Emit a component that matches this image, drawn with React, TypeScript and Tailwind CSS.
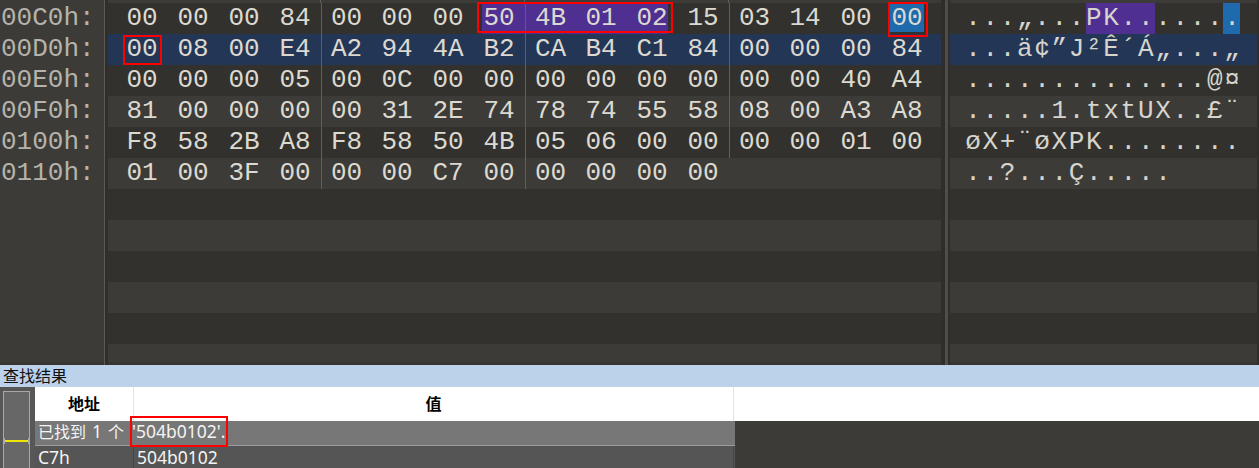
const hexRows: { addr: string; bytes: string[]; text: string }[] = [
  {
    addr: "00C0h:",
    bytes: "00 00 00 84 00 00 00 50 4B 01 02 15 03 14 00 00".split(" "),
    text: "...„...PK.......",
  },
  {
    addr: "00D0h:",
    bytes: "00 08 00 E4 A2 94 4A B2 CA B4 C1 84 00 00 00 84".split(" "),
    text: "...ä¢”J²Ê´Á„...„",
  },
  {
    addr: "00E0h:",
    bytes: "00 00 00 05 00 0C 00 00 00 00 00 00 00 00 40 A4".split(" "),
    text: "..............@¤",
  },
  {
    addr: "00F0h:",
    bytes: "81 00 00 00 00 31 2E 74 78 74 55 58 08 00 A3 A8".split(" "),
    text: ".....1.txtUX..£¨",
  },
  {
    addr: "0100h:",
    bytes: "F8 58 2B A8 F8 58 50 4B 05 06 00 00 00 00 01 00".split(" "),
    text: "øX+¨øXPK........",
  },
  {
    addr: "0110h:",
    bytes: "01 00 3F 00 00 00 C7 00 00 00 00 00".split(" "),
    text: "..?...Ç.....",
  },
];

const EMPTY_ROWS = 6;
const mono = "font-['Liberation_Mono','Courier_New',monospace]";

function rowBg(i: number) {
  if (i === 1) return "bg-[#243656]";
  return i % 2 === 0 ? "bg-[#32312d]" : "bg-[#3c3b37]";
}

function HexRow({ bytes, index }: { bytes: string[]; index: number }) {
  return (
    <div className={`relative flex h-[31px] shrink-0 pl-[8.5px] ${rowBg(index)}`}>
      {/* selection: 50 4B 01 02 and the single 00 */}
      {index === 0 && (
        <>
          <div className="absolute top-0 bottom-0 left-[374px] w-[186px] bg-[#4f2f92]" />
          <div className="absolute top-0 bottom-[2px] left-[782px] w-[34px] bg-[#1f69ad]" />
        </>
      )}
      {bytes.map((b, i) => (
        <div
          key={i}
          className={`relative w-[51px] text-center leading-[31px] ${
            i > 0 && i % 4 === 0 ? "border-l border-[#605f5a]" : ""
          }`}
        >
          {b}
        </div>
      ))}
    </div>
  );
}

function TextRow({ text, index }: { text: string; index: number }) {
  return (
    <div className={`relative flex h-[31px] shrink-0 pl-[14.4px] ${rowBg(index)}`}>
      {index === 0 && (
        <>
          <div className="absolute top-0 bottom-0 left-[135.5px] w-[69px] bg-[#4f2f92]" />
          <div className="absolute top-0 bottom-0 left-[272.5px] w-[17px] bg-[#1f69ad]" />
        </>
      )}
      {Array.from(text).map((c, i) => (
        <div key={i} className="relative w-[17.27px] text-center leading-[31px]">
          {c}
        </div>
      ))}
    </div>
  );
}

export default function App() {
  const empties = Array.from({ length: EMPTY_ROWS }, (_, k) => hexRows.length + k);

  return (
    <div className="relative flex h-[468px] w-[1259px] flex-col overflow-hidden bg-[#3a3935] font-['Noto_Sans','Noto_Sans_CJK_SC',sans-serif]">
      {/* hex editor */}
      <div className={`flex h-[365px] shrink-0 bg-[#363531] text-[26px] ${mono}`}>
        {/* addresses */}
        <div className="flex h-[362px] w-[104px] shrink-0 flex-col bg-[#3c3b37] pt-[3px] text-[#b5b3ab]">
          {hexRows.map((r) => (
            <div key={r.addr} className="h-[31px] pl-[1px] leading-[31px]">
              {r.addr}
            </div>
          ))}
        </div>
        <div className="w-[1px] shrink-0 bg-[#5a5954]" />
        <div className="w-[3px] shrink-0 bg-[#302f2b]" />

        {/* hex bytes */}
        <div className="flex h-[362px] w-[833px] shrink-0 flex-col overflow-hidden text-[#dcd9d0]">
          <div className="flex h-[3px] shrink-0 bg-[#3c3b37] pl-[212px]">
            <div className="w-[1px] bg-[#605f5a]" />
            <div className="w-[203px]" />
            <div className="w-[1px] bg-[#605f5a]" />
            <div className="w-[203px]" />
            <div className="w-[1px] bg-[#605f5a]" />
          </div>
          {hexRows.map((r, i) => (
            <HexRow key={r.addr} bytes={r.bytes} index={i} />
          ))}
          {empties.map((i) => (
            <div key={i} className={`h-[31px] shrink-0 ${rowBg(i)}`} />
          ))}
        </div>

        {/* splitter */}
        <div className="w-[4px] shrink-0 bg-[#2f2e2b]" />
        <div className="w-[3px] shrink-0 bg-[#4e4d4a]" />
        <div className="w-[2px] shrink-0 bg-[#2f2e2b]" />

        {/* text pane */}
        <div className="flex h-[362px] w-[307px] shrink-0 flex-col overflow-hidden text-[#d6d4cc]">
          <div className="h-[3px] shrink-0 bg-[#3c3b37]" />
          {hexRows.map((r, i) => (
            <TextRow key={r.addr} text={r.text} index={i} />
          ))}
          {empties.map((i) => (
            <div key={i} className={`h-[31px] shrink-0 ${rowBg(i)}`} />
          ))}
        </div>
        <div className="w-[2px] shrink-0 bg-[#2f2e2b]" />
      </div>

      {/* find results panel */}
      <div className="flex h-[22px] shrink-0 items-center bg-[#bcd2eb] pl-[3px] text-[16px] leading-none text-[#111]">
        查找结果
      </div>
      <div className="flex h-[81px] shrink-0">
        {/* overview strip */}
        <div className="flex w-[35px] shrink-0 bg-[#575757] pt-[4px] pl-[3px]">
          <div className="relative h-[90px] w-[27px] border border-[#a8a8a8] bg-[#676767]">
            <div className="absolute top-[48px] left-[1px] right-[1px] h-[2px] bg-[#f2e600]" />
            <div className="absolute top-[46px] left-[-1px] h-[6px] w-[2px] bg-[#a8a8a8]" />
            <div className="absolute top-[46px] right-[-1px] h-[6px] w-[2px] bg-[#a8a8a8]" />
          </div>
        </div>

        <div className="flex flex-1 flex-col">
          {/* header */}
          <div className="flex h-[34px] shrink-0 bg-white text-[16px] font-bold text-black">
            <div className="flex w-[99px] items-center justify-center border-r border-[#e3e3e3]">地址</div>
            <div className="flex w-[600px] items-center justify-center border-r border-[#e3e3e3]">值</div>
            <div className="flex-1" />
          </div>
          <div className="flex h-[47px] shrink-0">
            <div className="flex w-[700px] flex-col leading-none text-[#f4f4f4]">
              <div className="flex h-[25px] shrink-0 items-center border-b border-[#9c9c9c] bg-[#777777] pb-[2px] pl-[3px] text-[16px]">
                <span>已找到</span>
                <span className="ml-[6px] text-[17.5px]">1</span>
                <span className="ml-[6px]">个</span>
                <span className="ml-[8px] text-[17.5px]">'504b0102'.</span>
              </div>
              <div className="flex h-[22px] shrink-0 bg-[#555555] text-[17.5px]">
                <div className="flex w-[99px] items-center border-r border-[#464646] pt-[1px] pl-[3px]">C7h</div>
                <div className="flex w-[600px] items-center border-r border-[#464646] pt-[1px] pl-[3px]">504b0102</div>
              </div>
            </div>
            <div className="flex-1 bg-[#3c3b37]" />
          </div>
        </div>
      </div>

      {/* red annotation boxes */}
      <div className="absolute top-[2px] left-[477px] h-[31px] w-[196px] border-2 border-[#ff0000]" />
      <div className="absolute top-[2px] left-[888px] h-[35px] w-[40px] border-2 border-[#ff0000]" />
      <div className="absolute top-[35px] left-[123px] h-[30px] w-[39px] border-2 border-[#ff0000]" />
      <div className="absolute top-[416px] left-[130px] h-[31px] w-[98px] border-2 border-[#ff0000]" />
    </div>
  );
}
